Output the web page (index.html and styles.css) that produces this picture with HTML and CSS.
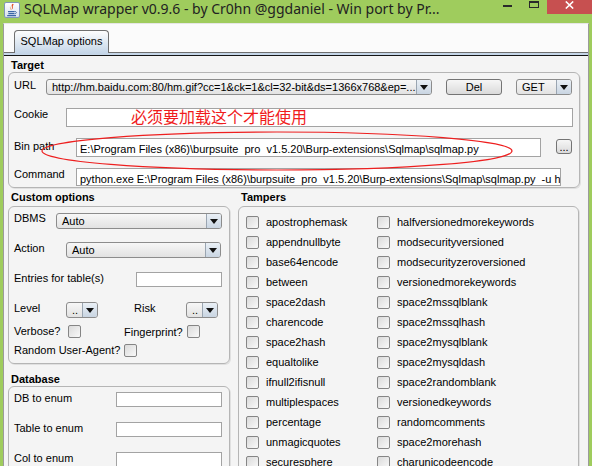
FILE: index.html
```html
<!DOCTYPE html>
<html>
<head>
<meta charset="utf-8">
<link rel="stylesheet" href="styles.css">
</head>
<body>
<div class="titlebar">
  <svg class="appicon" width="16" height="16" viewBox="0 0 16 16">
    <defs><linearGradient id="ig" x1="0" y1="0" x2="0" y2="1"><stop offset="0" stop-color="#ffffff"/><stop offset="1" stop-color="#d6e0ee"/></linearGradient></defs>
    <rect x="0.5" y="0.5" width="15" height="15" rx="1.5" fill="url(#ig)" stroke="#8196b8"/>
    <path d="M8.6 1.8 C6.2 3.8 9.4 5.2 7.2 8.2 C10.4 6.2 7.6 4.6 9.8 2.6 Z" fill="#e2552a"/>
    <path d="M6.2 4.2 C5.2 5.4 6.8 6.4 6 7.8 C7.6 6.6 6 5.6 6.2 4.2 Z" fill="#f08a2c"/>
    <path d="M4 9.6 H10.6 M4.4 11.6 H10.2 M3.2 13.6 H12" stroke="#3b66a6" stroke-width="1.1" fill="none"/>
    <path d="M10.6 9.4 C13 9.4 13 11.8 10.4 11.8" stroke="#3b66a6" stroke-width="1" fill="none"/>
  </svg>
  <span class="title">SQLMap wrapper v0.9.6 - by Cr0hn @ggdaniel - Win port by Pr...</span>
  <div class="controls">
    <div class="min"></div>
    <div class="max"></div>
    <div class="close">
      <svg width="9" height="8" viewBox="0 0 9 8"><path d="M0.8 0.5 L8.2 7.5 M8.2 0.5 L0.8 7.5" stroke="#fff" stroke-width="1.6"/></svg>
    </div>
  </div>
</div>
<div class="client">
  <div class="tabs"><div class="tab">SQLMap options</div></div>
  <div class="tabline"></div>
  <div class="panel">
    <div class="heading">Target</div>
    <div class="box target">
      <div class="trow">
        <span class="lbl w32">URL</span>
        <div class="combo url"><span class="val">http://hm.baidu.com:80/hm.gif?cc=1&amp;ck=1&amp;cl=32-bit&amp;ds=1366x768&amp;ep=...</span><span class="arr"><i></i></span></div>
        <div class="btn del">Del</div>
        <div class="combo get"><span class="val">GET</span><span class="arr"><i></i></span></div>
      </div>
      <div class="trow cookie">
        <span class="lbl w52">Cookie</span>
        <div class="field grow"></div>
      </div>
      <div class="trow bin">
        <span class="lbl w62 low">Bin path</span>
        <div class="field binf">E:\Program Files (x86)\burpsuite  pro  v1.5.20\Burp-extensions\Sqlmap\sqlmap.py</div>
        <div class="btn dots">...</div>
      </div>
      <div class="trow cmd">
        <span class="lbl w62">Command</span>
        <div class="field cmdf">python.exe E:\Program Files (x86)\burpsuite  pro  v1.5.20\Burp-extensions\Sqlmap\sqlmap.py  -u http://hm.baidu.com</div>
      </div>
      <div class="note">必须要加载这个才能使用</div>
      <svg class="ring" width="480" height="46" viewBox="40 128 480 46">
        <ellipse cx="277" cy="151" rx="235" ry="19" fill="none" stroke="#ee1f1f" stroke-width="1.2"/>
      </svg>
    </div>
    <div class="cols">
      <div class="col">
        <div class="heading">Custom options</div>
        <div class="box custom">
          <div class="crow r1"><span class="lbl w42 up">DBMS</span><div class="combo dbms"><span class="val">Auto</span><span class="arr"><i></i></span></div></div>
          <div class="crow r2"><span class="lbl w52">Action</span><div class="combo action"><span class="val">Auto</span><span class="arr"><i></i></span></div></div>
          <div class="crow r3"><span class="lbl w122">Entries for table(s)</span><div class="field entries"></div></div>
          <div class="crow r4"><span class="lbl w52">Level</span><div class="combo small"><span class="val">..</span><span class="arr"><i></i></span></div><span class="lbl risk">Risk</span><div class="combo small"><span class="val">..</span><span class="arr"><i></i></span></div></div>
          <div class="crow r5"><span class="lbl w54">Verbose?</span><span class="cb"></span><span class="lbl fp">Fingerprint?</span><span class="cb"></span></div>
          <div class="crow r6"><span class="lbl w110">Random User-Agent?</span><span class="cb"></span></div>
        </div>
        <div class="heading db">Database</div>
        <div class="box dbbox">
          <div class="crow"><span class="lbl w102">DB to enum</span><div class="field dbf"></div></div>
          <div class="crow gap15"><span class="lbl w102">Table to enum</span><div class="field dbf"></div></div>
          <div class="crow gap15"><span class="lbl w102">Col to enum</span><div class="field dbf"></div></div>
        </div>
      </div>
      <div class="col">
        <div class="heading">Tampers</div>
        <div class="box tampers">
          <div class="t"><span class="cb"></span>apostrophemask</div><div class="t"><span class="cb"></span>halfversionedmorekeywords</div>
          <div class="t"><span class="cb"></span>appendnullbyte</div><div class="t"><span class="cb"></span>modsecurityversioned</div>
          <div class="t"><span class="cb"></span>base64encode</div><div class="t"><span class="cb"></span>modsecurityzeroversioned</div>
          <div class="t"><span class="cb"></span>between</div><div class="t"><span class="cb"></span>versionedmorekeywords</div>
          <div class="t"><span class="cb"></span>space2dash</div><div class="t"><span class="cb"></span>space2mssqlblank</div>
          <div class="t"><span class="cb"></span>charencode</div><div class="t"><span class="cb"></span>space2mssqlhash</div>
          <div class="t"><span class="cb"></span>space2hash</div><div class="t"><span class="cb"></span>space2mysqlblank</div>
          <div class="t"><span class="cb"></span>equaltolike</div><div class="t"><span class="cb"></span>space2mysqldash</div>
          <div class="t"><span class="cb"></span>ifnull2ifisnull</div><div class="t"><span class="cb"></span>space2randomblank</div>
          <div class="t"><span class="cb"></span>multiplespaces</div><div class="t"><span class="cb"></span>versionedkeywords</div>
          <div class="t"><span class="cb"></span>percentage</div><div class="t"><span class="cb"></span>randomcomments</div>
          <div class="t"><span class="cb"></span>unmagicquotes</div><div class="t"><span class="cb"></span>space2morehash</div>
          <div class="t"><span class="cb"></span>securesphere</div><div class="t"><span class="cb"></span>charunicodeencode</div>
        </div>
      </div>
    </div>
  </div>
</div>
</body>
</html>
```
FILE: styles.css
```css
* { box-sizing: border-box; }
html, body { margin: 0; padding: 0; }
body {
  width: 592px; height: 466px; overflow: hidden;
  background: #9fcc5d;
  font-family: "Liberation Sans", Arial, sans-serif;
  font-size: 11px; color: #000;
}
.titlebar { height: 23px; display: flex; align-items: flex-start; }
.appicon { flex: none; margin: 2px 0 0 4px; }
.title {
  margin-left: 4px; font-family: "Noto Sans", sans-serif; font-size: 14px;
  line-height: 17px; color: #222; white-space: nowrap;
}
.controls { margin-left: auto; display: flex; align-items: flex-start; }
.min { width: 9px; height: 2px; background: #2a2a2a; margin-top: 5px; margin-right: 17px; }
.max { width: 10px; height: 7px; border: 1px solid #2a2a2a; border-top-width: 2px; margin-top: 1px; margin-right: 8px; }
.close { width: 45px; height: 14px; background: #c75050; display: flex; justify-content: center; padding-top: 1px; }

.client {
  height: 443px; margin: 0 3px; background: #fbfbfb;
  border: 1px solid #9b9b9b; border-top-color: #e6e6e6; border-bottom: none;
  display: flex; flex-direction: column;
}
.tabs { height: 28px; padding: 6px 0 0 10px; display: flex; align-items: flex-start; }
.tab {
  position: relative; z-index: 1; width: 95px; height: 23px;
  border: 1px solid #6f6f6f; border-bottom: none; border-radius: 4px 4px 0 0;
  background: linear-gradient(#fdfdfd, #c5d6e8);
  text-align: center; line-height: 20px;
}
.tabline { height: 4px; border-top: 1px solid #6f6f6f; border-bottom: 1px solid #151515; background: #c5d6e8; flex: none; }
.panel { flex: 1; background: #f4f4f4; padding: 0 8px 0 4px; overflow: hidden; position: relative; }

.heading { font-weight: bold; padding: 2px 0 0 3px; line-height: 14px; height: 16px; }
.cols .heading { height: 18px; }
.cols .heading.db { height: 16px; margin-top: 6px; }

.box { border: 1px solid #b5b5b5; border-radius: 6px; box-shadow: 1px 1px 0 #e0e0e0; }

.lbl { flex: none; line-height: 12px; white-space: nowrap; }
.lbl.low { padding-top: 2px; }
.lbl.up { margin-top: -1px; }
.w32 { width: 32px; } .w42 { width: 42px; } .w52 { width: 52px; } .w54 { width: 54px; }
.w62 { width: 62px; } .w102 { width: 102px; } .w110 { width: 110px; } .w122 { width: 122px; }

.target { height: 116px; padding: 6px 6px 1px 5px; position: relative; }
.trow { display: flex; align-items: flex-start; }
.trow.cookie { margin-top: 13px; }
.trow.bin { margin-top: 11px; }
.trow.cmd { margin-top: 11px; }

.field {
  background: #fff; border: 1px solid #a3a3a3; height: 19px;
  padding: 2px 0 0 3px; line-height: 17px; white-space: pre; overflow: hidden;
}
.grow { flex: 1; }
.binf { width: 465px; }
.cmdf { width: 485px; height: 18px; }

.combo {
  flex: none; display: flex; height: 16px;
  border: 1px solid #8c8c8c; border-radius: 3px;
  background: linear-gradient(#f7f7f7, #e2e2e2);
  overflow: hidden;
}
.combo .val { flex: 1; padding-left: 5px; line-height: 14px; white-space: nowrap; overflow: hidden; }
.combo .arr {
  flex: none; width: 15px; border-left: 1px solid #9aa5b1;
  background: linear-gradient(#eaf0f6, #c9d5e2);
  display: flex; align-items: center; justify-content: center;
}
.combo .arr i { width: 0; height: 0; border-left: 4px solid transparent; border-right: 4px solid transparent; border-top: 5px solid #111; }
.combo.url { width: 386px; }
.combo.get { width: 56px; margin-left: 14px; }
.combo.dbms { width: 166px; }
.combo.action { width: 155px; }
.combo.small { width: 32px; }
.combo.small .val { padding-left: 5px; }

.btn {
  flex: none; height: 16px; border: 1px solid #747474; border-radius: 3px;
  background: linear-gradient(#f6f6f6, #dadada);
  text-align: center; line-height: 14px;
}
.btn.del { width: 56px; margin-left: 14px; }
.btn.dots { width: 16px; height: 15px; margin: 1px 0 0 15px; line-height: 15px; }

.note {
  position: absolute; left: 122px; top: 35px;
  font-family: "Noto Sans CJK SC", sans-serif; font-size: 16px; line-height: 16px;
  color: #f01c1c; white-space: nowrap;
}
.ring { position: absolute; left: 31px; top: 55px; }

.cols { display: grid; grid-template-columns: 222px 341px; column-gap: 8px; }
.custom { height: 158px; padding: 6px 0 0 5px; }
.crow { display: flex; align-items: flex-start; }
.r1 { height: 16px; }
.r2 { height: 16px; margin-top: 13px; }
.r3 { height: 15px; margin-top: 14px; }
.r4 { height: 16px; margin-top: 15px; }
.r5 { height: 13px; margin-top: 7px; }
.r6 { height: 13px; margin-top: 6px; }
.risk { width: 52px; margin-left: 36px; }
.fp { width: 63px; margin-left: 43px; padding-top: 1px; }
.entries { width: 86px; height: 15px; }
.dbbox { height: 120px; padding: 5px 0 0 5px; }
.dbf { width: 106px; height: 15px; }
.gap15 { margin-top: 15px; }

.cb {
  flex: none; display: inline-block; width: 13px; height: 13px;
  border: 1px solid #858585; border-radius: 2px;
  background: linear-gradient(135deg, #dadada, #f9f9f9);
}
.tampers {
  height: 290px; padding: 5px 0 0 7px;
  display: grid; grid-template-columns: 131px auto; grid-auto-rows: 20px; align-content: start;
}
.t { display: flex; align-items: center; line-height: 20px; white-space: nowrap; }
.t .cb { margin-right: 7px; }
```
